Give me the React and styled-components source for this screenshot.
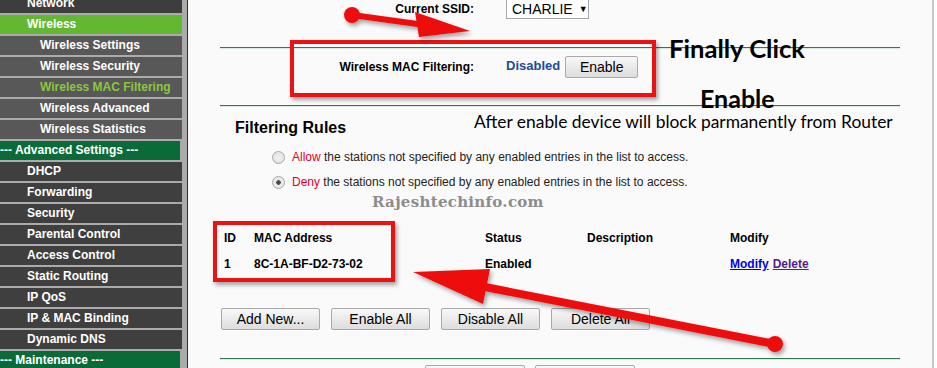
import React from 'react';
import styled, { createGlobalStyle } from 'styled-components';

const GlobalStyle = createGlobalStyle`
    html, body {
        margin: 0;
        padding: 0;
        background: #ffffff;
    }
    body {
        font-family: "Liberation Sans", Arial, sans-serif;
    }
`;

const Page = styled.div`
    position: relative;
    display: flex;
    align-items: flex-start;
    width: 937px;
    height: 368px;
    overflow: hidden;
    background: #ffffff;
`;

const Sidebar = styled.ul`
    list-style: none;
    margin: 0;
    padding: 0;
    width: 187px;
    height: 368px;
    flex-shrink: 0;
    background: #ababab;
    border-right: 1px solid #2e2e2e;
    display: flex;
    flex-direction: column;
    gap: 2px;
`;

const menuBg = {
    top: '#3d3d3d',
    open: '#63b832',
    sub: '#585858',
    deep: '#3f3f3f',
    section: '#0b6b38',
};

const MenuItem = styled.li`
    width: ${props => props.kind === 'section' ? '180px' : '182px'};
    height: 19px;
    flex-shrink: 0;
    box-sizing: border-box;
    padding-left: ${props => props.indent}px;
    background: ${props => menuBg[props.kind]};
    color: ${props => props.active ? '#8cc63f' : '#ffffff'};
    font: bold 12px/19px "Liberation Sans", Arial, sans-serif;
    white-space: nowrap;
    &:first-child {
        margin-top: -6px;
    }
`;

const Content = styled.main`
    width: 744px;
    height: 368px;
    flex-shrink: 0;
    background: #fafafa;
    border-right: 2px solid #c9c9c9;
    display: flex;
    flex-direction: column;
    font-size: 12px;
    color: #000;
    & > * {
        flex-shrink: 0;
    }
`;

const FormRow = styled.div`
    display: grid;
    grid-template-columns: 286px auto;
    column-gap: 32px;
    align-items: center;
    height: ${props => props.h}px;
    margin-top: ${props => props.top}px;
`;

const Label = styled.div`
    text-align: right;
    font-weight: bold;
    font-size: 12px;
`;

const Value = styled.div`
    display: flex;
    align-items: center;
    gap: 5px;
`;

const Select = styled.div`
    box-sizing: border-box;
    width: 83px;
    height: 20px;
    border: 1px solid #a6a6a6;
    background: #fff;
    display: flex;
    align-items: center;
    padding-left: 5px;
    gap: 6px;
    font-size: 14px;
    span {
        font-size: 9px;
    }
`;

const Status = styled.span`
    color: #1a4c9c;
    font-weight: bold;
    font-size: 13px;
    margin-top: -3px;
`;

const Button = styled.button`
    box-sizing: border-box;
    width: ${props => props.w || 99}px;
    height: 22px;
    padding: 0;
    border: 1px solid #a9a9a9;
    border-radius: 2px;
    background: linear-gradient(#f8f8f8, #dddddd);
    font: 14px "Liberation Sans", Arial, sans-serif;
    color: #000;
    flex-shrink: 0;
`;

const Divider = styled.div`
    margin-top: ${props => props.top}px;
    margin-left: 32px;
    width: 680px;
    height: 1px;
    background: #2a7a4c;
    border-bottom: 1px solid #dbe9df;
`;

const Heading = styled.h2`
    margin: 11px 0 0 47px;
    font-size: 16px;
    line-height: 20px;
    font-weight: bold;
`;

const RadioRow = styled.label`
    display: flex;
    align-items: center;
    height: 20px;
    margin-top: ${props => props.top}px;
    padding-left: 84px;
    gap: 7px;
    font-size: 12px;
    color: #222;
    em {
        font-style: normal;
        color: #e8001c;
    }
`;

const Radio = styled.span`
    box-sizing: border-box;
    width: 13px;
    height: 13px;
    border-radius: 50%;
    border: 1px solid #a8a8a8;
    background: radial-gradient(circle, ${props => props.checked ? '#4a4a4a 0 2px, #e9e9e9 2.5px' : '#f2f2f2 0, #dcdcdc 100%'});
`;

const Table = styled.div`
    margin-top: 36px;
    padding-left: 36px;
    display: grid;
    grid-template-columns: 30px 231px 102px 143px 1fr;
    grid-auto-rows: 20px;
    row-gap: 6px;
    align-items: center;
    font-weight: bold;
    font-size: 12px;
`;

const Link = styled.a`
    color: ${props => props.visited ? '#551a8b' : '#0000ee'};
    text-decoration: underline;
    margin-right: 4px;
`;

const ButtonRow = styled.div`
    display: flex;
    gap: ${props => props.gap}px;
    margin-top: ${props => props.top}px;
    padding-left: ${props => props.left}px;
`;

const Box = styled.div`
    position: absolute;
    box-sizing: border-box;
    border: 4px solid #ee1111;
    box-shadow: 2px 3px 4px rgba(0, 0, 0, 0.35);
    pointer-events: none;
`;

const Note = styled.div`
    position: absolute;
    font-family: Lato, "Open Sans", sans-serif;
    font-weight: ${props => props.bold ? 700 : 400};
    font-size: ${props => props.size}px;
    line-height: 1;
    color: #000;
    white-space: nowrap;
`;

const Watermark = styled.div`
    position: absolute;
    left: 372px;
    top: 193px;
    font: bold 15px "DejaVu Serif", serif;
    letter-spacing: 0.3px;
    color: #8c8c8c;
`;

const Overlay = styled.svg`
    position: absolute;
    left: 0;
    top: 0;
    pointer-events: none;
`;

const menu = [
    { label: 'Network', kind: 'top', indent: 27 },
    { label: 'Wireless', kind: 'open', indent: 27 },
    { label: 'Wireless Settings', kind: 'sub', indent: 40 },
    { label: 'Wireless Security', kind: 'sub', indent: 40 },
    { label: 'Wireless MAC Filtering', kind: 'sub', indent: 40, active: true },
    { label: 'Wireless Advanced', kind: 'sub', indent: 40 },
    { label: 'Wireless Statistics', kind: 'sub', indent: 40 },
    { label: '--- Advanced Settings ---', kind: 'section', indent: 0 },
    { label: 'DHCP', kind: 'deep', indent: 27 },
    { label: 'Forwarding', kind: 'deep', indent: 27 },
    { label: 'Security', kind: 'deep', indent: 27 },
    { label: 'Parental Control', kind: 'deep', indent: 27 },
    { label: 'Access Control', kind: 'deep', indent: 27 },
    { label: 'Static Routing', kind: 'deep', indent: 27 },
    { label: 'IP QoS', kind: 'deep', indent: 27 },
    { label: 'IP & MAC Binding', kind: 'deep', indent: 27 },
    { label: 'Dynamic DNS', kind: 'deep', indent: 27 },
    { label: '--- Maintenance ---', kind: 'section', indent: 0 },
];

function App() {
    return (
        <Page>
            <GlobalStyle />
            <Sidebar>
                {menu.map((item, i) => (
                    <MenuItem key={i} kind={item.kind} indent={item.indent} active={item.active}>
                        {item.label}
                    </MenuItem>
                ))}
            </Sidebar>

            <Content>
                <FormRow h={20} top={-1}>
                    <Label>Current SSID:</Label>
                    <Value>
                        <Select>CHARLIE <span>▼</span></Select>
                    </Value>
                </FormRow>
                <Divider top={28} />
                <FormRow h={22} top={7}>
                    <Label>Wireless MAC Filtering:</Label>
                    <Value>
                        <Status>Disabled</Status>
                        <Button w={73}>Enable</Button>
                    </Value>
                </FormRow>
                <Divider top={27} />
                <Heading>Filtering Rules</Heading>
                <RadioRow top={9}>
                    <Radio />
                    <span><em>Allow</em> the stations not specified by any enabled entries in the list to access.</span>
                </RadioRow>
                <RadioRow top={5}>
                    <Radio checked />
                    <span><em>Deny</em> the stations not specified by any enabled entries in the list to access.</span>
                </RadioRow>
                <Table>
                    <div>ID</div>
                    <div>MAC Address</div>
                    <div>Status</div>
                    <div>Description</div>
                    <div>Modify</div>
                    <div>1</div>
                    <div>8C-1A-BF-D2-73-02</div>
                    <div>Enabled</div>
                    <div></div>
                    <div>
                        <Link>Modify</Link>
                        <Link visited>Delete</Link>
                    </div>
                </Table>
                <ButtonRow top={34} left={33} gap={11}>
                    <Button>Add New...</Button>
                    <Button>Enable All</Button>
                    <Button>Disable All</Button>
                    <Button>Delete All</Button>
                </ButtonRow>
                <Divider top={28} />
                <ButtonRow top={5} left={237} gap={10}>
                    <Button w={100} aria-label="Previous" />
                    <Button w={100} aria-label="Next" />
                </ButtonRow>
            </Content>

            <Watermark>Rajeshtechinfo.com</Watermark>

            <Box style={{ left: 290, top: 40, width: 366, height: 57 }} />
            <Box style={{ left: 213, top: 221, width: 182, height: 61 }} />

            <Note bold size={25.6} style={{ left: 669, top: 36 }}>Finally Click</Note>
            <Note bold size={25} style={{ left: 700, top: 86 }}>Enable</Note>
            <Note size={17.4} style={{ left: 474, top: 113 }}>After enable device will block parmanently from Router</Note>

            <Overlay width="937" height="368" viewBox="0 0 937 368">
                <defs>
                    <filter id="shade" x="-10%" y="-10%" width="130%" height="140%">
                        <feDropShadow dx="2" dy="3" stdDeviation="2" floodColor="#000" floodOpacity="0.35" />
                    </filter>
                </defs>
                <g fill="#ee1111" stroke="none" filter="url(#shade)">
                    <circle cx="352" cy="15" r="8" />
                    <line x1="352" y1="15" x2="425" y2="25" stroke="#ee1111" strokeWidth="6" />
                    <polygon points="470,31 415,12 419,37" />

                    <circle cx="775" cy="344" r="8" />
                    <line x1="775" y1="344" x2="480" y2="286" stroke="#ee1111" strokeWidth="8" />
                    <polygon points="413,272 490,269 483,304" />
                </g>
            </Overlay>
        </Page>
    );
}

export default App;
